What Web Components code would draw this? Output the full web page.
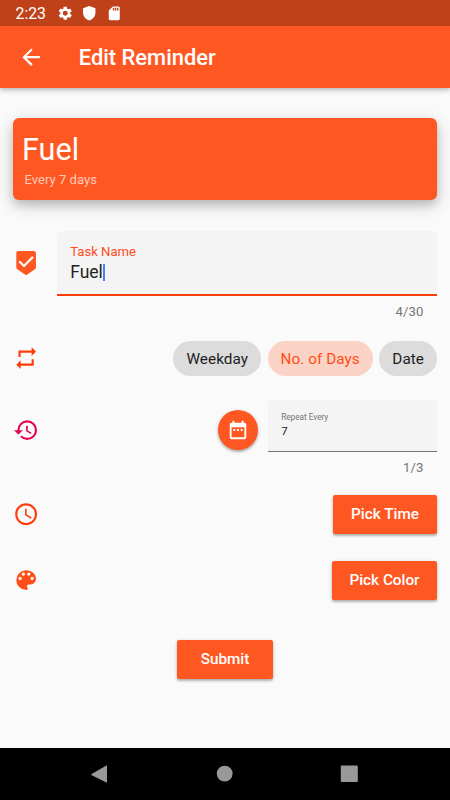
<!DOCTYPE html>
<html lang="en">
<head>
<meta charset="utf-8">
<meta name="viewport" content="width=device-width, initial-scale=1">
<title>Edit Reminder</title>
<style>
  body {
    margin: 0;
  }
</style>
</head>
<body>
<reminder-app></reminder-app>

<script>
const icons = {
  settings: 'M19.14 12.94c.04-.3.06-.61.06-.94 0-.32-.02-.64-.07-.94l2.03-1.58c.18-.14.23-.41.12-.61l-1.92-3.32c-.12-.22-.37-.29-.59-.22l-2.39.96c-.5-.38-1.03-.7-1.62-.94l-.36-2.54c-.04-.24-.24-.41-.48-.41h-3.84c-.24 0-.43.17-.47.41l-.36 2.54c-.59.24-1.13.57-1.62.94l-2.39-.96c-.22-.08-.47 0-.59.22L2.74 8.87c-.12.21-.08.47.12.61l2.03 1.58c-.05.3-.09.63-.09.94s.02.64.07.94l-2.03 1.58c-.18.14-.23.41-.12.61l1.92 3.32c.12.22.37.29.59.22l2.39-.96c.5.38 1.03.7 1.62.94l.36 2.54c.05.24.24.41.48.41h3.84c.24 0 .44-.17.47-.41l.36-2.54c.59-.24 1.13-.56 1.62-.94l2.39.96c.22.08.47 0 .59-.22l1.92-3.32c.12-.22.07-.47-.12-.61l-2.01-1.58zM12 15.6a3.6 3.6 0 1 1 0-7.2 3.6 3.6 0 0 1 0 7.2z',
  shield: 'M12 1.5L3 4.8v6.4c0 5.2 3.8 9.8 9 11.3 5.2-1.5 9-6.1 9-11.3V4.8L12 1.5z',
  sd: 'M18 2h-8L4 8v12c0 1.1.9 2 2 2h12c1.1 0 2-.9 2-2V4c0-1.1-.9-2-2-2zm-6 6h-2V4h2v4zm3 0h-2V4h2v4zm3 0h-2V4h2v4z',
  back: 'M20 11H7.83l5.59-5.59L12 4l-8 8 8 8 1.41-1.41L7.83 13H20v-2z',
  task: 'M19 1H5c-1.1 0-1.99.9-1.99 2L3 15.93c0 .69.35 1.3.88 1.66L12 23l8.11-5.41c.53-.36.88-.97.88-1.66L21 3c0-1.1-.9-2-2-2zm-9 15l-5-5 1.41-1.41L10 13.17l7.59-7.59L19 7l-9 9z',
  repeat: 'M7 7h10v3l4-4-4-4v3H5v6h2V7zm10 10H7v-3l-4 4 4 4v-3h12v-6h-2v4z',
  history: 'M13 3a9 9 0 0 0-9 9H1l3.89 3.89.07.14L9 12H6c0-3.87 3.13-7 7-7s7 3.13 7 7-3.13 7-7 7c-1.93 0-3.68-.79-4.94-2.06l-1.42 1.42A8.954 8.954 0 0 0 13 21a9 9 0 0 0 0-18zm-1 5v5l4.28 2.54.72-1.21-3.5-2.08V8H12z',
  clock: 'M11.99 2C6.47 2 2 6.48 2 12s4.47 10 9.99 10C17.52 22 22 17.52 22 12S17.52 2 11.99 2zM12 20c-4.42 0-8-3.58-8-8s3.58-8 8-8 8 3.58 8 8-3.58 8-8 8zm.5-13H11v6l5.25 3.15.75-1.23-4.5-2.67V7z',
  palette: 'M12 3a9 9 0 0 0 0 18c.83 0 1.5-.67 1.5-1.5 0-.39-.15-.74-.39-1.01-.23-.26-.38-.61-.38-.99 0-.83.67-1.5 1.5-1.5H16c2.76 0 5-2.24 5-5 0-4.42-4.03-8-9-8zm-5.5 9a1.5 1.5 0 1 1 0-3 1.5 1.5 0 0 1 0 3zm3-4a1.5 1.5 0 1 1 0-3 1.5 1.5 0 0 1 0 3zm5 0a1.5 1.5 0 1 1 0-3 1.5 1.5 0 0 1 0 3zm3 4a1.5 1.5 0 1 1 0-3 1.5 1.5 0 0 1 0 3z',
  calendar: 'M9 11H7v2h2v-2zm4 0h-2v2h2v-2zm4 0h-2v2h2v-2zm2-7h-1V2h-2v2H8V2H6v2H5c-1.11 0-1.99.9-1.99 2L3 20c0 1.1.89 2 2 2h14c1.1 0 2-.9 2-2V6c0-1.1-.9-2-2-2zm0 16H5V9h14v11z'
}

class Icon extends HTMLElement {
  constructor () {
    super()
    this.shadow = this.attachShadow({ mode: 'open' })
  }

  connectedCallback () {
    this.shadow.innerHTML =
    /* html */`
    <style>
      :host{
        display: block;
        flex: none;
        height: var(--icon-size, 26.25px);
        width: var(--icon-size, 26.25px);
      }

      svg{
        display: block;
        fill: currentColor;
        height: 100%;
        width: 100%;
      }
    </style>

    <svg viewBox="0 0 24 24"><path d="${icons[this.getAttribute('name')]}"/></svg>
    `
  }
}

class StatusBar extends HTMLElement {
  constructor () {
    super()
    this.shadow = this.attachShadow({ mode: 'open' })
  }

  connectedCallback () {
    this.shadow.innerHTML =
    /* html */`
    <style>
      :host{
        align-items: center;
        background: #bf4119;
        box-sizing: border-box;
        color: #fff;
        display: flex;
        flex: none;
        height: 26px;
        padding: 1px 0 0 15.5px;
      }

      time{
        font-size: 15.8px;
        width: 41.7px;
      }

      app-icon{
        --icon-size: 16.5px;
        margin-right: 7.8px;
      }
    </style>

    <time>2:23</time>
    <app-icon name="settings"></app-icon>
    <app-icon name="shield"></app-icon>
    <app-icon name="sd"></app-icon>
    `
  }
}

class AppBar extends HTMLElement {
  constructor () {
    super()
    this.shadow = this.attachShadow({ mode: 'open' })
  }

  connectedCallback () {
    this.shadow.innerHTML =
    /* html */`
    <style>
      :host{
        align-items: center;
        background: #ff5722;
        box-shadow: 0 2px 4px rgba(0, 0, 0, 0.2), 0 4px 6px rgba(0, 0, 0, 0.06);
        box-sizing: border-box;
        color: #fff;
        display: flex;
        flex: none;
        gap: 35px;
        height: 61.5px;
        padding-left: 17.5px;
      }

      h1{
        font-size: 21.9px;
        font-weight: 500;
        line-height: 26px;
        margin: 2px 0 0;
      }
    </style>

    <app-icon name="back"></app-icon>
    <h1><slot></slot></h1>
    `
  }
}

class ReminderCard extends HTMLElement {
  constructor () {
    super()
    this.shadow = this.attachShadow({ mode: 'open' })
  }

  connectedCallback () {
    this.shadow.innerHTML =
    /* html */`
    <style>
      :host{
        background: #ff5722;
        border-radius: 6px;
        box-shadow: 0 5px 8px rgba(0, 0, 0, 0.14), 0 5px 18px rgba(0, 0, 0, 0.18);
        box-sizing: border-box;
        color: #fff;
        display: block;
        height: 82px;
        padding: 14px 9px 0;
      }

      .name{
        font-size: 30.6px;
        line-height: 36px;
      }

      .period{
        color: rgba(255, 255, 255, 0.7);
        font-size: 13.1px;
        line-height: 16px;
        margin: 4px 0 0 2.5px;
      }
    </style>

    <div class="name"><slot name="name"></slot></div>
    <div class="period"><slot name="period"></slot></div>
    `
  }
}

class FormRow extends HTMLElement {
  constructor () {
    super()
    this.shadow = this.attachShadow({ mode: 'open' })
  }

  connectedCallback () {
    this.shadow.innerHTML =
    /* html */`
    <style>
      :host{
        align-items: center;
        display: flex;
        justify-content: space-between;
      }

      app-icon{
        color: var(--row-icon-color, #ff3d0a);
        margin-top: var(--row-icon-offset, 0);
      }

      .content{
        align-items: center;
        display: flex;
        gap: 6.5px;
      }
    </style>

    <app-icon name="${this.getAttribute('icon')}"></app-icon>
    <div class="content"><slot></slot></div>
    `
  }
}

class TextField extends HTMLElement {
  constructor () {
    super()
    this.shadow = this.attachShadow({ mode: 'open' })
  }

  connectedCallback () {
    this.shadow.innerHTML =
    /* html */`
    <style>
      :host{
        display: block;
        width: 169px;
      }

      .box{
        background: #f4f4f4;
        border-bottom: 1px solid #777;
        border-radius: 4.5px 4.5px 0 0;
        box-sizing: border-box;
        height: 52px;
        padding: 12px 13.2px 0;
      }

      .label{
        color: #757575;
        font-size: 8.2px;
        line-height: 10px;
      }

      .value{
        align-items: center;
        color: #222;
        display: flex;
        font-size: 11.5px;
        line-height: 14px;
        margin-top: 2px;
      }

      .counter{
        color: #757575;
        font-size: 13.1px;
        letter-spacing: 0.1px;
        line-height: 16px;
        margin: 8px 13.5px 0 0;
        text-align: right;
      }

      :host([focused]){
        width: 380px;
      }

      :host([focused]) .box{
        border-bottom: 2px solid #ff3d0a;
        height: 65px;
        padding-top: 13px;
      }

      :host([focused]) .label{
        color: #ff4a1a;
        font-size: 13.1px;
        line-height: 16px;
      }

      :host([focused]) .value{
        font-size: 17.5px;
        line-height: 20px;
        margin-top: 2px;
      }

      :host([focused]) .value::after{
        background: #4a80f0;
        content: '';
        height: 17px;
        width: 2px;
      }
    </style>

    <div class="box">
      <div class="label">${this.getAttribute('label')}</div>
      <div class="value">${this.getAttribute('value')}</div>
    </div>
    <div class="counter">${this.getAttribute('counter')}</div>
    `
  }
}

class ChoiceChip extends HTMLElement {
  constructor () {
    super()
    this.shadow = this.attachShadow({ mode: 'open' })
  }

  connectedCallback () {
    this.shadow.innerHTML =
    /* html */`
    <style>
      :host{
        background: #dcdcdc;
        border-radius: 17.5px;
        box-sizing: border-box;
        color: #1e1e1e;
        display: block;
        font-size: 15.3px;
        height: 35px;
        letter-spacing: 0.05px;
        line-height: 36px;
        padding: 0 13px;
      }

      :host([selected]){
        background: #fbd2c6;
        color: #ff4d15;
      }
    </style>

    <slot></slot>
    `
  }
}

class RaisedButton extends HTMLElement {
  constructor () {
    super()
    this.shadow = this.attachShadow({ mode: 'open' })
  }

  connectedCallback () {
    this.shadow.innerHTML =
    /* html */`
    <style>
      :host{
        display: block;
      }

      button{
        background: #ff5722;
        border: 0;
        border-radius: 2px;
        box-shadow: 0 2px 2px rgba(0, 0, 0, 0.2), 0 1px 4px rgba(0, 0, 0, 0.16);
        color: #fff;
        display: block;
        font: inherit;
        font-size: 15.3px;
        font-weight: 500;
        height: 39px;
        line-height: 39px;
        padding: 0;
        width: var(--button-width, 104px);
      }
    </style>

    <button type="button"><slot></slot></button>
    `
  }
}

class DateButton extends HTMLElement {
  constructor () {
    super()
    this.shadow = this.attachShadow({ mode: 'open' })
  }

  connectedCallback () {
    this.shadow.innerHTML =
    /* html */`
    <style>
      :host{
        --icon-size: 22px;
        align-items: center;
        background: #ff5722;
        border-radius: 50%;
        box-shadow: 0 2px 2px rgba(0, 0, 0, 0.2), 0 1px 4px rgba(0, 0, 0, 0.16);
        color: #fff;
        display: flex;
        height: 40px;
        justify-content: center;
        width: 40px;
      }
    </style>

    <app-icon name="calendar"></app-icon>
    `
  }
}

class NavBar extends HTMLElement {
  constructor () {
    super()
    this.shadow = this.attachShadow({ mode: 'open' })
  }

  connectedCallback () {
    this.shadow.innerHTML =
    /* html */`
    <style>
      :host{
        align-items: center;
        background: #000;
        box-sizing: border-box;
        display: flex;
        flex: none;
        height: 52px;
        justify-content: space-between;
        padding: 0 92px 0 90px;
      }

      svg{
        fill: #999;
        height: 18px;
        width: 18px;
      }
    </style>

    <svg viewBox="0 0 18 18"><path d="M1.300 9.200 16.300.5q.7-.2.700.6v16q0 .7-.7.400L1.300 9.900q-.5-.4 0-.7z"/></svg>
    <svg viewBox="0 0 18 18"><circle cx="9.700" cy="8.600" r="7.900"/></svg>
    <svg viewBox="0 0 18 18"><rect x=".8" y=".4" width="17" height="16.700" rx="1"/></svg>
    `
  }
}

class ReminderApp extends HTMLElement {
  constructor () {
    super()
    this.shadow = this.attachShadow({ mode: 'open' })
  }

  connectedCallback () {
    this.shadow.innerHTML =
    /* html */`
    <style>
      :host{
        background: #fafafa;
        display: flex;
        flex-direction: column;
        font-family: Roboto, "Liberation Sans", sans-serif;
        height: 800px;
        overflow: hidden;
        width: 450px;
      }

      main{
        box-sizing: border-box;
        display: flex;
        flex: 1;
        flex-direction: column;
        padding: 30.5px 13px 0;
      }

      .task{
        --row-icon-color: #ff5722;
        --row-icon-offset: 18.5px;
        align-items: flex-start;
        margin-top: 31px;
      }

      .type{
        height: 35px;
        margin-top: 21px;
      }

      .interval{
        --row-icon-color: #e6004f;
        height: 60px;
        margin-top: 24px;
      }

      .interval date-button{
        margin-right: 3.5px;
      }

      .interval text-field{
        height: 60px;
      }

      .time{
        height: 39px;
        margin-top: 35px;
      }

      .color{
        --button-width: 105px;
        --row-icon-color: #ff4d1a;
        height: 39px;
        margin-top: 27px;
      }

      .submit{
        --button-width: 96px;
        align-self: center;
        margin-top: 39.5px;
      }
    </style>

    <status-bar></status-bar>
    <app-bar>Edit Reminder</app-bar>
    <main>
      <reminder-card>
        <span slot="name">Fuel</span>
        <span slot="period">Every 7 days</span>
      </reminder-card>
      <form-row class="task" icon="task">
        <text-field focused label="Task Name" value="Fuel" counter="4/30"></text-field>
      </form-row>
      <form-row class="type" icon="repeat">
        <choice-chip>Weekday</choice-chip>
        <choice-chip selected>No. of Days</choice-chip>
        <choice-chip>Date</choice-chip>
      </form-row>
      <form-row class="interval" icon="history">
        <date-button></date-button>
        <text-field label="Repeat Every" value="7" counter="1/3"></text-field>
      </form-row>
      <form-row class="time" icon="clock">
        <raised-button>Pick Time</raised-button>
      </form-row>
      <form-row class="color" icon="palette">
        <raised-button>Pick Color</raised-button>
      </form-row>
      <raised-button class="submit">Submit</raised-button>
    </main>
    <nav-bar></nav-bar>
    `
  }
}

customElements.define('app-icon', Icon)
customElements.define('status-bar', StatusBar)
customElements.define('app-bar', AppBar)
customElements.define('reminder-card', ReminderCard)
customElements.define('form-row', FormRow)
customElements.define('text-field', TextField)
customElements.define('choice-chip', ChoiceChip)
customElements.define('raised-button', RaisedButton)
customElements.define('date-button', DateButton)
customElements.define('nav-bar', NavBar)
customElements.define('reminder-app', ReminderApp)
</script>
</body>
</html>
